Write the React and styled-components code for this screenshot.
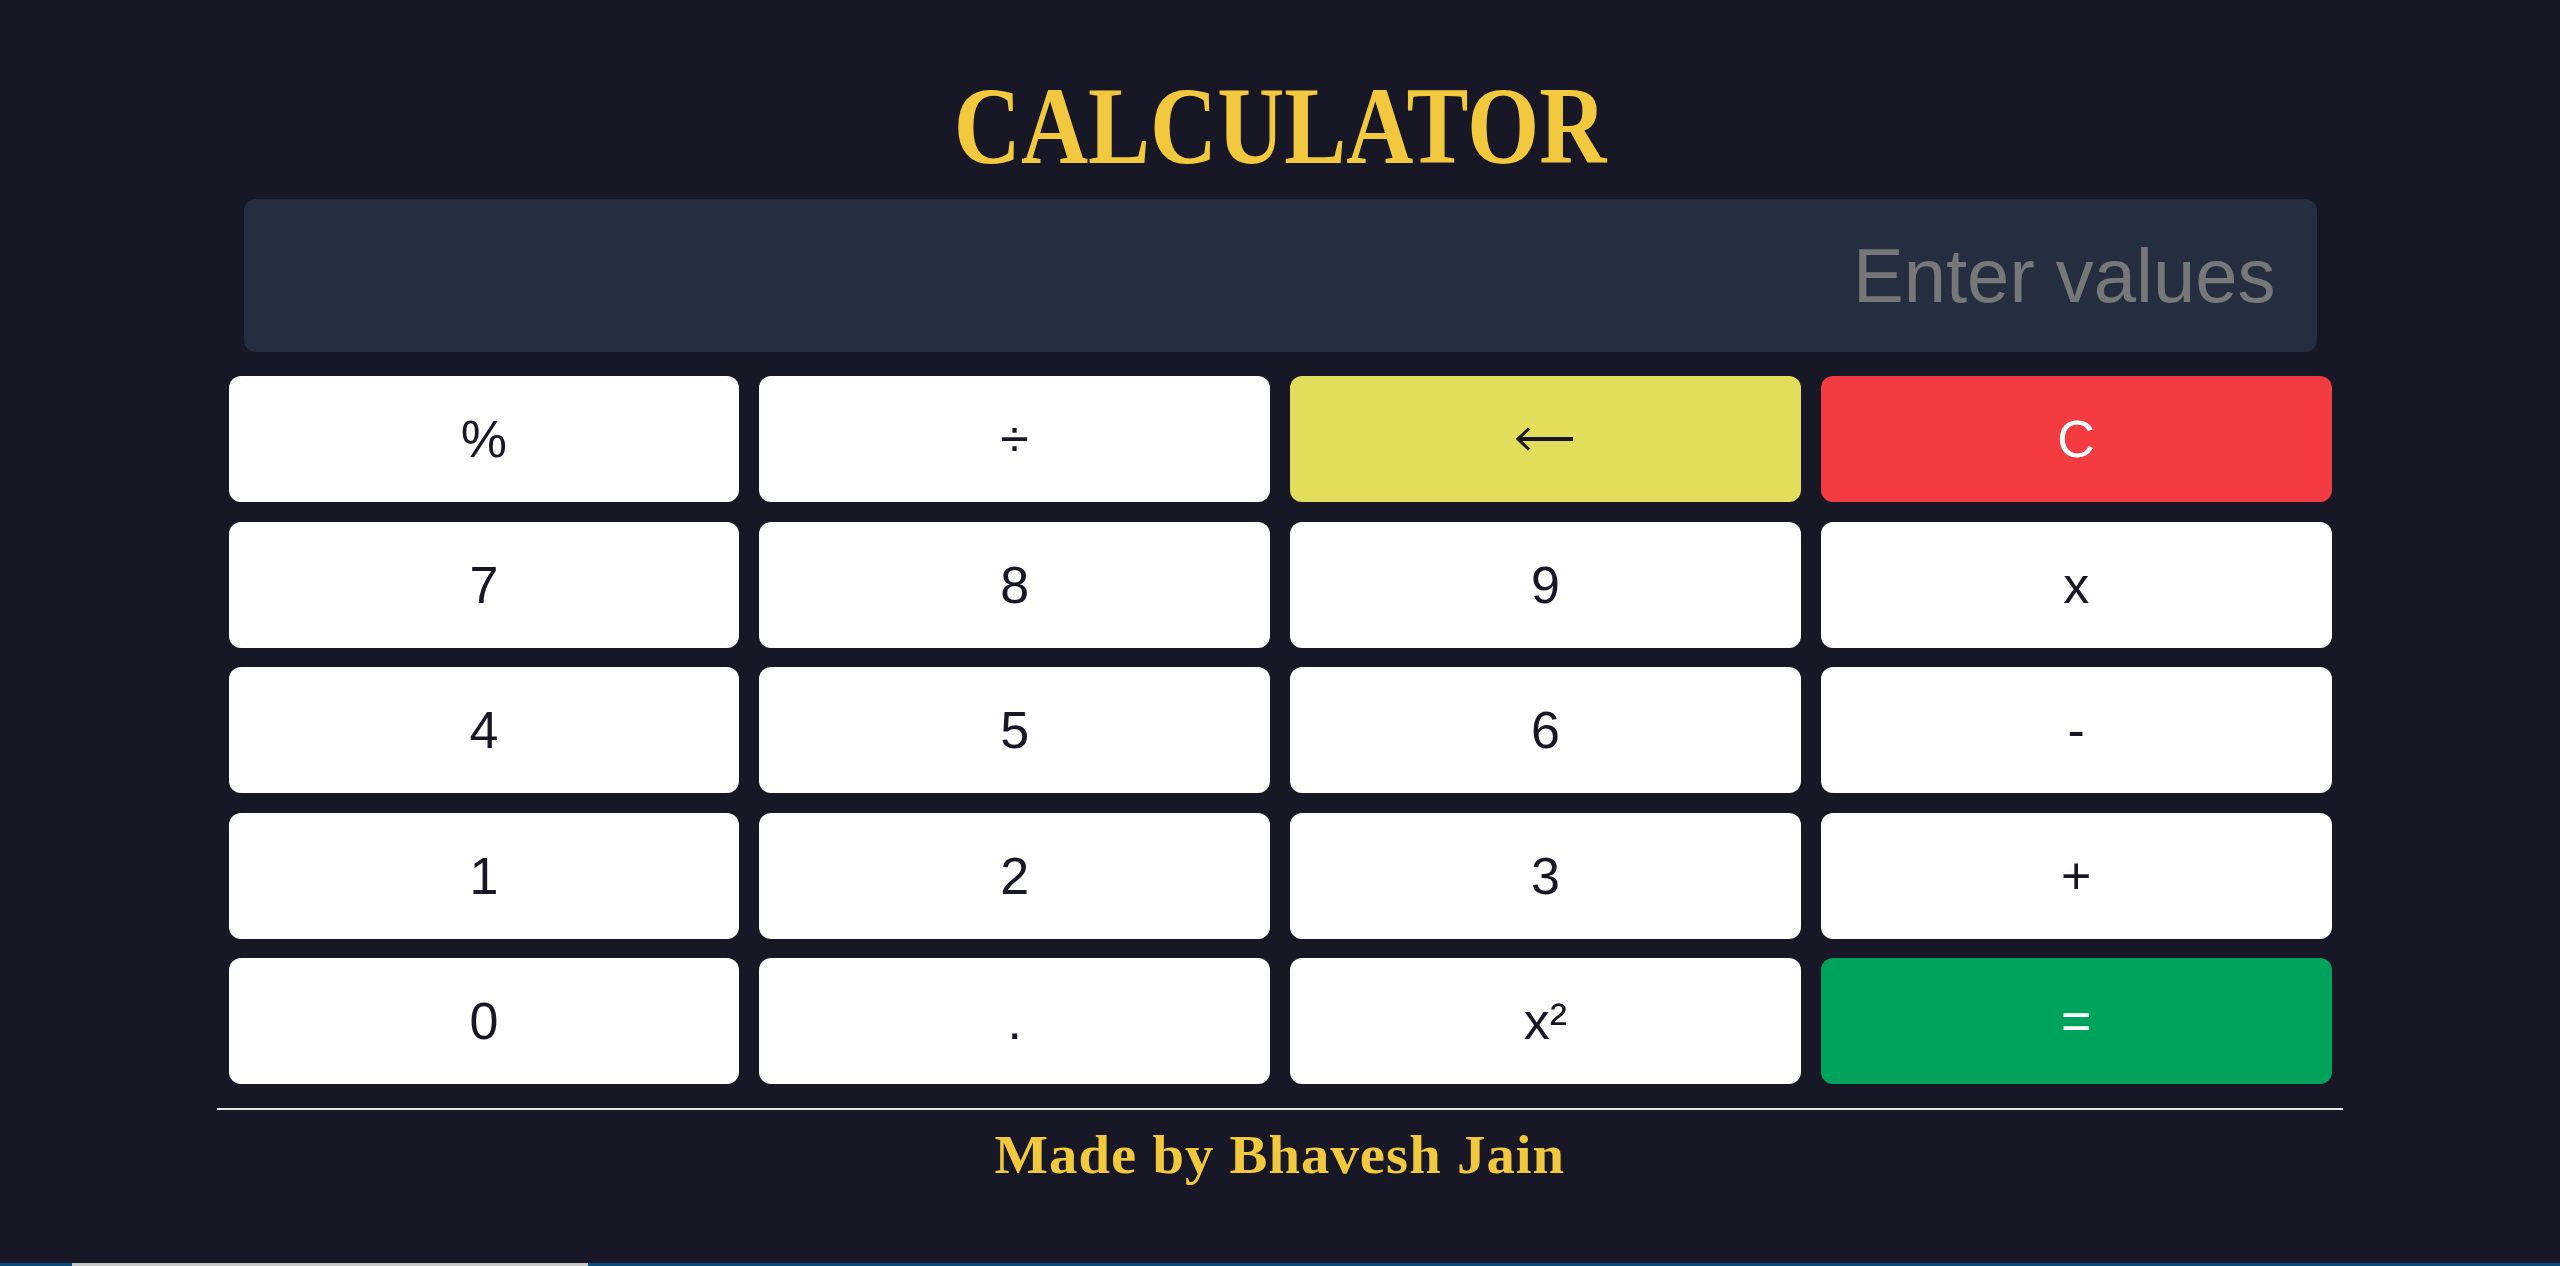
import React, { useState } from "react";
import styled, { createGlobalStyle } from "styled-components";

const GlobalStyle = createGlobalStyle`
  * { box-sizing: border-box; }
  body {
    margin: 0;
    background: #181725;
    font-family: "Liberation Sans", Arial, sans-serif;
  }
`;

const Page = styled.main`
  display: flex;
  flex-direction: column;
  align-items: center;
  padding-top: 71px;
  min-height: 100vh;
`;

const Title = styled.h1`
  margin: 0;
  font-family: "Liberation Serif", "Times New Roman", serif;
  font-weight: 700;
  font-size: 110px;
  line-height: 1;
  color: #f2c93e;
  transform: scaleX(0.845);
`;

const Display = styled.input`
  margin-top: 18px;
  width: 2073px;
  height: 153px;
  padding: 0 41px;
  border: none;
  outline: none;
  border-radius: 12px;
  background: #252e40;
  color: #ffffff;
  font-family: "Liberation Sans", Arial, sans-serif;
  font-size: 76px;
  text-align: right;

  &::placeholder {
    color: #777777;
  }
`;

const Keypad = styled.div`
  margin-top: 24px;
  width: 2103px;
  display: grid;
  grid-template-columns: repeat(4, 1fr);
  grid-auto-rows: 126px;
  column-gap: 20px;
  row-gap: 19.5px;
`;

const variants = {
  plain: { bg: "#ffffff", fg: "#181725" },
  back: { bg: "#e2dd5a", fg: "#181725" },
  clear: { bg: "#f33c42", fg: "#ffffff" },
  equal: { bg: "#00a35b", fg: "#ffffff" },
};

const Key = styled.button`
  display: flex;
  align-items: center;
  justify-content: center;
  border: none;
  border-radius: 12px;
  padding: 0;
  background: ${(p) => variants[p.$kind].bg};
  color: ${(p) => variants[p.$kind].fg};
  font-family: "Liberation Sans", Arial, sans-serif;
  font-size: 52px;
  cursor: pointer;
`;

const Rule = styled.hr`
  margin: 24px 0 0;
  width: 2126px;
  height: 2px;
  border: none;
  background: #e6e6e6;
`;

const Footer = styled.p`
  margin: 18px 0 0;
  font-family: "Liberation Serif", "Times New Roman", serif;
  font-weight: 700;
  font-size: 54px;
  line-height: 1;
  letter-spacing: 1px;
  color: #f2c93e;
  transform: scaleX(1.05);
`;

const ScrollTrack = styled.div`
  position: fixed;
  left: 0;
  right: 0;
  bottom: 0;
  height: 3px;
  background: #0b4a7c;
`;

const ScrollThumb = styled.div`
  margin-left: 72px;
  width: 516px;
  height: 100%;
  background: #c8c8c8;
`;

const BackArrow = () => (
  <svg width="58" height="24" viewBox="0 0 58 24" aria-label="back">
    <path d="M3 12 H57" stroke="#181725" strokeWidth="4" />
    <path d="M13 1.5 L2 12 L13 22.5" stroke="#181725" strokeWidth="3" fill="none" />
  </svg>
);

const keys = [
  { label: "%" }, { label: "÷" }, { label: "back", kind: "back" }, { label: "C", kind: "clear" },
  { label: "7" }, { label: "8" }, { label: "9" }, { label: "x" },
  { label: "4" }, { label: "5" }, { label: "6" }, { label: "-" },
  { label: "1" }, { label: "2" }, { label: "3" }, { label: "+" },
  { label: "0" }, { label: "." }, { label: "x²" }, { label: "=", kind: "equal" },
];

export default function App() {
  const [value, setValue] = useState("");

  const press = (label) => {
    if (label === "C") return setValue("");
    if (label === "back") return setValue((v) => v.slice(0, -1));
    if (label === "=") {
      try {
        const expr = value.replace(/x/g, "*").replace(/÷/g, "/");
        setValue(String(Function(`return (${expr})`)()));
      } catch {
        setValue("Error");
      }
      return;
    }
    if (label === "x²") return setValue((v) => `(${v})**2`);
    setValue((v) => v + label);
  };

  return (
    <>
      <GlobalStyle />
      <Page>
        <Title>CALCULATOR</Title>
        <Display
          placeholder="Enter values"
          value={value}
          onChange={(e) => setValue(e.target.value)}
        />
        <Keypad>
          {keys.map((k) => (
            <Key key={k.label} $kind={k.kind || "plain"} onClick={() => press(k.label)}>
              {k.label === "back" ? <BackArrow /> : k.label}
            </Key>
          ))}
        </Keypad>
        <Rule />
        <Footer>Made by Bhavesh Jain</Footer>
      </Page>
      <ScrollTrack>
        <ScrollThumb />
      </ScrollTrack>
    </>
  );
}
